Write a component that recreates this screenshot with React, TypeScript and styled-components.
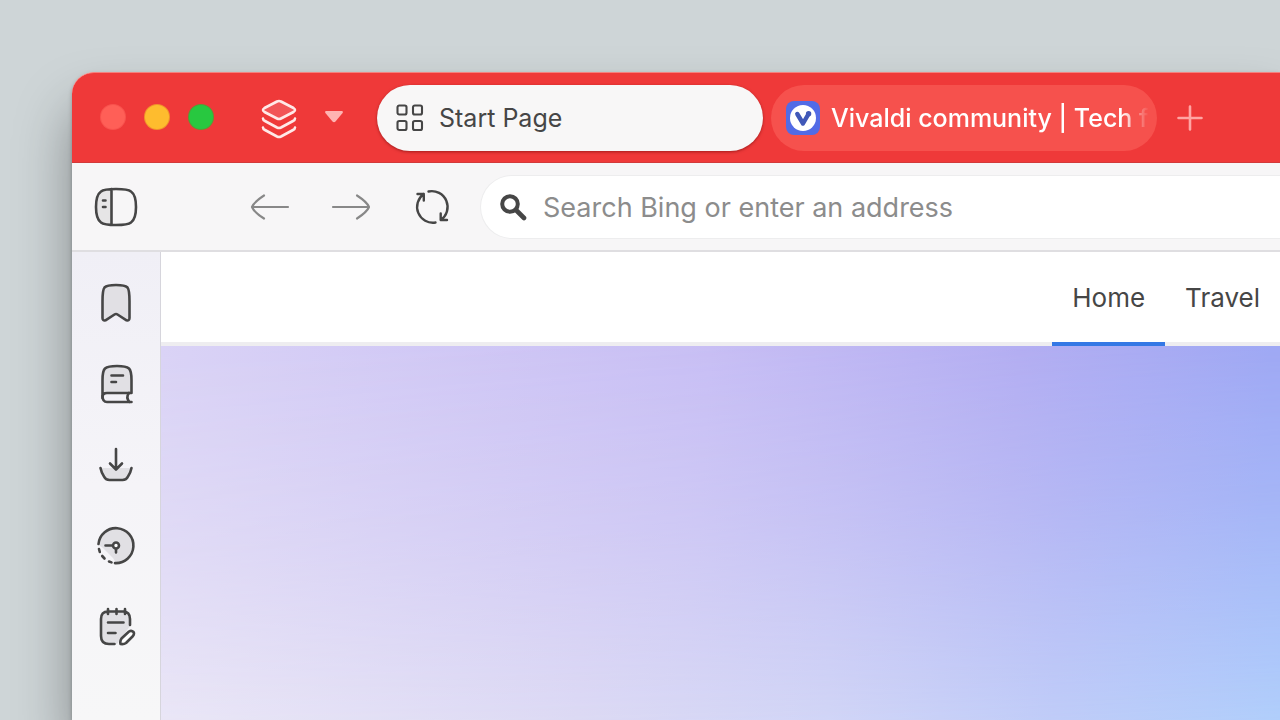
import React from "react";
import styled, { createGlobalStyle } from "styled-components";

const GlobalStyle = createGlobalStyle`
  * { box-sizing: border-box; }
  body {
    margin: 0;
    background: #ced5d7;
    font-family: Inter, "Liberation Sans", sans-serif;
    color: #464646;
  }
  button { padding: 0; border: 0; background: none; color: inherit; font: inherit; }
  svg { display: block; }
`;

const Desktop = styled.div`
  min-height: 100vh;
  padding: 72px 0 0 72px;
  display: flex;
  overflow: hidden;
`;

const BrowserWindow = styled.div`
  flex: 1;
  min-width: 0;
  display: flex;
  flex-direction: column;
  border-radius: 22px 0 0 0;
  background: #f7f6f7;
  box-shadow: 0 2px 4px rgba(0, 0, 0, 0.25), 0 36px 56px rgba(0, 0, 0, 0.36);
`;

const TabStrip = styled.header`
  height: 91px;
  display: flex;
  align-items: center;
  padding: 0 0 2px 29px;
  border-radius: 22px 0 0 0;
  border-top: 1px solid #f4827f;
  border-bottom: 1px solid #d23a3a;
  background: #ef3939;
  overflow: hidden;
`;

const Lights = styled.div`
  display: flex;
  gap: 20px;
  margin-right: 44px;
`;

const Light = styled.button<{ $color: string; $rim: string }>`
  width: 24px;
  height: 24px;
  border-radius: 50%;
  background: ${(p) => p.$color};
  box-shadow: 0 0 0 1px ${(p) => p.$rim};
`;

const StackButton = styled.button`
  display: flex;
  align-items: center;
  justify-content: space-between;
  width: 87px;
  padding-top: 3px;
  margin-right: 33px;
`;

const Tabs = styled.div`
  display: flex;
  gap: 8px;
  padding-top: 2px;
`;

const Tab = styled.button<{ $active?: boolean }>`
  display: flex;
  align-items: center;
  gap: ${(p) => (p.$active ? 14 : 10)}px;
  width: 386px;
  height: 66px;
  padding: 0 8px 0 ${(p) => (p.$active ? 18 : 14)}px;
  border-radius: 33px;
  font-size: 25px;
  font-weight: ${(p) => (p.$active ? 400 : 500)};
  text-align: left;
  color: ${(p) => (p.$active ? "#464646" : "#fff")};
  background: ${(p) => (p.$active ? "#f8f7f7" : "#f6514d")};
  box-shadow: ${(p) => (p.$active ? "0 1px 3px rgba(90, 0, 0, 0.5)" : "none")};
`;

const TabTitle = styled.span<{ $faded?: boolean }>`
  flex: 1;
  min-width: 0;
  overflow: hidden;
  white-space: nowrap;
  line-height: 36px;
  mask-image: ${(p) => (p.$faded ? "linear-gradient(90deg, #000 calc(100% - 28px), transparent)" : "none")};
`;

const NewTab = styled.button`
  width: 66px;
  display: flex;
  justify-content: center;
  padding-top: 2px;
`;

const Toolbar = styled.div`
  height: 89px;
  display: flex;
  align-items: center;
  padding-left: 3px;
  border-bottom: 2px solid #dfdee1;
  background: #f7f6f7;
`;

const ToolButton = styled.button<{ $dim?: boolean }>`
  width: 81px;
  height: 81px;
  display: flex;
  align-items: center;
  justify-content: center;
  color: ${(p) => (p.$dim ? "#888" : "#464646")};
`;

const NavButtons = styled.div`
  display: flex;
  margin: 0 9px 0 73px;
`;

const AddressField = styled.label`
  flex: 1;
  min-width: 0;
  height: 62px;
  display: flex;
  align-items: center;
  gap: 16px;
  padding-left: 18px;
  border-radius: 31px 0 0 31px;
  background: #fff;
  box-shadow: 0 0 0 1px #ededee;
`;

const AddressInput = styled.input`
  flex: 1;
  min-width: 0;
  padding: 2px 0 0;
  border: 0;
  outline: 0;
  background: transparent;
  font: inherit;
  font-size: 27px;
  line-height: 36px;
  color: #464646;
  &::placeholder { color: #8c8c8c; opacity: 1; }
`;

const Body = styled.div`
  flex: 1;
  display: flex;
`;

const Panel = styled.aside`
  width: 89px;
  display: flex;
  flex-direction: column;
  padding: 10px 0 0 3px;
  border-right: 1px solid #d6d5dc;
  background: linear-gradient(#f0eff6, #f5f4f8 50%, #f7f7f8);
`;

const Page = styled.main`
  flex: 1;
  min-width: 0;
  display: flex;
  flex-direction: column;
`;

const SiteNav = styled.nav`
  height: 94px;
  display: flex;
  justify-content: flex-end;
  background: #fff;
  box-shadow: inset 0 -4px #eeedf0;
`;

const NavLink = styled.a<{ $current?: boolean }>`
  padding: 28px 20px 0;
  font-size: 26px;
  line-height: 36px;
  text-decoration: none;
  color: #464646;
  border-bottom: 4px solid ${(p) => (p.$current ? "#3478e5" : "transparent")};
`;

const Wallpaper = styled.section`
  flex: 1;
  display: flex;
  background: linear-gradient(94deg, #dad3f6, #c7bdf5 48%, #b2abf2 75%, #9da4f4 97%);
  &::after {
    content: "";
    flex: 1;
    background: linear-gradient(92deg, #edeaf6, #dedcf4 38%, #d2d7f6 60%, #c0cdf8 80%, #b0cefb);
    mask-image: linear-gradient(177deg, transparent, rgba(0, 0, 0, 0.4) 48%, #000);
  }
`;

const StrokeSvg = styled.svg`
  fill: none;
  stroke: currentColor;
  stroke-width: 2.6;
  stroke-linecap: round;
  stroke-linejoin: round;
`;

const TINT = "#e1e0e4";

const StackIcon = () => (
  <StrokeSvg width="44" height="44" viewBox="0 0 44 44" color="#ffe9e8" aria-hidden="true">
    <path d="M20 5.500Q22 4.600 24 5.500L36.500 12Q39.500 14 36.500 16L24 22.500Q22 23.500 20 22.500L7.500 16Q4.500 14 7.500 12Z" fill="#f25557" />
    <path d="M6 22.500Q6 24 8 25L20 31.500Q22 32.500 24 31.500L36 25Q38 24 38 22.500" />
    <path d="M6 31.500Q6 33 8 34L20 40.500Q22 41.500 24 40.500L36 34Q38 33 38 31.500" />
  </StrokeSvg>
);

const CaretIcon = () => (
  <svg width="20" height="14" viewBox="0 0 20 14" aria-hidden="true">
    <path d="M2 0H18Q19.800 .5 18.600 2L11.500 10.500Q10 12 8.500 10.500L1.400 2Q.2 .5 2 0Z" fill="#ffb4b2" />
  </svg>
);

const GridIcon = () => (
  <StrokeSvg width="30" height="30" viewBox="0 0 30 30" aria-hidden="true">
    <g style={{ strokeWidth: 2.1 }}>
      <rect x="2.500" y="2.500" width="9" height="9" rx="1.800" />
      <rect x="18" y="2.500" width="9" height="9" rx="1.800" />
      <rect x="2.500" y="18" width="9" height="9" rx="1.800" />
      <rect x="18" y="18" width="9" height="9" rx="1.800" />
    </g>
  </StrokeSvg>
);

const VivaldiLogo = () => (
  <svg width="36" height="36" viewBox="0 0 36 36" aria-hidden="true">
    <rect x="1" y="1" width="34" height="34" rx="8" fill="#526be6" />
    <circle cx="18" cy="18" r="13" fill="#fff" />
    <path d="M12.300 14L18 23.500L23.500 14" fill="none" stroke="#4058b8" strokeWidth="4.400" strokeLinecap="round" strokeLinejoin="round" />
    <circle cx="23.600" cy="13.800" r="2.700" fill="#4058b8" />
  </svg>
);

const PlusIcon = () => (
  <StrokeSvg width="28" height="28" viewBox="0 0 28 28" color="#ffa5a3" aria-hidden="true">
    <path d="M14 2.500V25.500M2.500 14H25.500" />
  </StrokeSvg>
);

const PanelIcon = () => (
  <StrokeSvg width="44" height="40" viewBox="0 0 44 40" aria-hidden="true">
    <path d="M17 2H13Q2 2 2 13V27Q2 38 13 38H17Z" fill="#e6e5e6" stroke="none" />
    <path d="M22 2Q34 2 37 4.500Q42 8 42 20Q42 32 37 35.500Q34 38 22 38Q10 38 7 35.500Q2 32 2 20Q2 8 7 4.500Q10 2 22 2ZM17.500 2V38" />
    <path d="M9 13.500H11.500M9 20H11.500" />
  </StrokeSvg>
);

const BackIcon = () => (
  <StrokeSvg width="40" height="28" viewBox="0 0 40 28" aria-hidden="true">
    <path d="M38 14H2M14 2.500Q4 9 2 14Q4 19 14 25.500" style={{ strokeWidth: 2.2 }} />
  </StrokeSvg>
);

const ForwardIcon = () => (
  <StrokeSvg width="40" height="28" viewBox="0 0 40 28" aria-hidden="true">
    <path d="M2 14H38M26 2.500Q36 9 38 14Q36 19 26 25.500" style={{ strokeWidth: 2.2 }} />
  </StrokeSvg>
);

const ReloadIcon = () => (
  <StrokeSvg width="38" height="38" viewBox="0 0 38 38" aria-hidden="true">
    <g style={{ strokeWidth: 2.4 }}>
      <path d="M15.500 3.500A15.800 15.800 0 0 1 27.700 32M27.700 25.500V32H34" />
      <path d="M22.500 34.500A15.800 15.800 0 0 1 10.800 6M10.800 12.500V6H4.500" />
    </g>
  </StrokeSvg>
);

const SearchIcon = () => (
  <StrokeSvg width="28" height="28" viewBox="0 0 28 28" aria-hidden="true">
    <circle cx="11" cy="11" r="7.800" style={{ strokeWidth: 4 }} />
    <path d="M17 17L25 25" style={{ strokeWidth: 4.6 }} />
  </StrokeSvg>
);

const BookmarkIcon = () => (
  <StrokeSvg width="40" height="40" viewBox="0 0 40 40" aria-hidden="true">
    <path d="M6.500 18Q6.500 7 8.500 4.500Q11 2 20 2Q29 2 31.500 4.500Q33.500 7 33.500 18V35Q33.500 38 30.500 37.300L21.500 31.500Q20 30.500 18.500 31.500L9.500 37.300Q6.500 38 6.500 35Z" fill={TINT} />
  </StrokeSvg>
);

const BookIcon = () => (
  <StrokeSvg width="40" height="40" viewBox="0 0 40 40" aria-hidden="true">
    <path d="M6.500 34V16Q6.500 7 9 4.500Q12 2 21 2Q30 2 33 4.500Q35.500 7 35.500 16V29H11Q6.500 29 6.500 33Z" fill={TINT} />
    <path d="M6.500 32Q6.500 38 11 38H35.500M33 29Q29.500 33.500 33.500 38M15.500 11.500H27M15.500 18H20" />
  </StrokeSvg>
);

const DownloadIcon = () => (
  <StrokeSvg width="40" height="40" viewBox="0 0 40 40" aria-hidden="true">
    <path d="M5 23H35L31.500 32Q30 35 26 35H14Q10 35 8.500 32Z" fill={TINT} stroke="none" />
    <path d="M4.500 23Q5.500 28 8 31.500Q9.500 35 13.500 35H26.500Q30.500 35 32 31.500Q34.500 28 35.500 23M20 4V24M14 18.500L20 24.500L26 18.500" />
  </StrokeSvg>
);

const HistoryIcon = () => (
  <StrokeSvg width="40" height="40" viewBox="0 0 40 40" aria-hidden="true">
    <path d="M2.500 19A17.500 17.500 0 1 1 20 37L17 32L7 22Z" fill={TINT} stroke="none" />
    <path d="M2.500 18A17.500 17.500 0 1 1 19 37.100M3 23L3.800 26M6.200 30L8.500 32.500M13 35.500L15.500 36.400M9.500 19.500H16.500M20 23V26.500" />
    <circle cx="20" cy="19.500" r="3" fill="#fff" />
  </StrokeSvg>
);

const NotesIcon = () => (
  <StrokeSvg width="40" height="40" viewBox="0 0 40 40" aria-hidden="true">
    <path d="M5 12Q5 4.500 12 4.500H27Q34 4.500 34 12V19L21 37H13Q5 37 5 29Z" fill={TINT} stroke="none" />
    <path d="M34 18V12Q34 4.500 27 4.500H12Q5 4.500 5 12V29Q5 37 13 37H18.500M12 2V7M20.500 2V7M29 2V7M12 15.500H27.500M12 26H19.500" />
    <path d="M25.500 31.500L33 24.500Q35.500 23 37.500 25Q38.800 27 36.500 29.500L30 36Q28 37.500 24.500 37Q23.800 34 25.500 31.500Z" fill="#fff" />
  </StrokeSvg>
);

const panels = [
  { name: "Bookmarks", Icon: BookmarkIcon },
  { name: "Reading list", Icon: BookIcon },
  { name: "Downloads", Icon: DownloadIcon },
  { name: "History", Icon: HistoryIcon },
  { name: "Notes", Icon: NotesIcon },
];

export default function App() {
  return (
    <>
      <GlobalStyle />
      <Desktop>
        <BrowserWindow>
          <TabStrip>
            <Lights>
              <Light aria-label="Close" $color="#ff5f57" $rim="#f8534e" />
              <Light aria-label="Minimize" $color="#febc2e" $rim="#f0932c" />
              <Light aria-label="Zoom" $color="#28c840" $rim="#5a9a35" />
            </Lights>
            <StackButton aria-label="Workspaces">
              <StackIcon />
              <CaretIcon />
            </StackButton>
            <Tabs>
              <Tab $active>
                <GridIcon />
                <TabTitle>Start Page</TabTitle>
              </Tab>
              <Tab>
                <VivaldiLogo />
                <TabTitle $faded>Vivaldi community | Tech for</TabTitle>
              </Tab>
            </Tabs>
            <NewTab aria-label="New tab">
              <PlusIcon />
            </NewTab>
          </TabStrip>
          <Toolbar>
            <ToolButton aria-label="Toggle panel"><PanelIcon /></ToolButton>
            <NavButtons>
              <ToolButton $dim aria-label="Back"><BackIcon /></ToolButton>
              <ToolButton $dim aria-label="Forward"><ForwardIcon /></ToolButton>
              <ToolButton aria-label="Reload"><ReloadIcon /></ToolButton>
            </NavButtons>
            <AddressField>
              <SearchIcon />
              <AddressInput type="text" aria-label="Address" placeholder="Search Bing or enter an address" />
            </AddressField>
          </Toolbar>
          <Body>
            <Panel>
              {panels.map(({ name, Icon }) => (
                <ToolButton key={name} aria-label={name}><Icon /></ToolButton>
              ))}
            </Panel>
            <Page>
              <SiteNav>
                <NavLink href="#home" $current>Home</NavLink>
                <NavLink href="#travel">Travel</NavLink>
              </SiteNav>
              <Wallpaper />
            </Page>
          </Body>
        </BrowserWindow>
      </Desktop>
    </>
  );
}
